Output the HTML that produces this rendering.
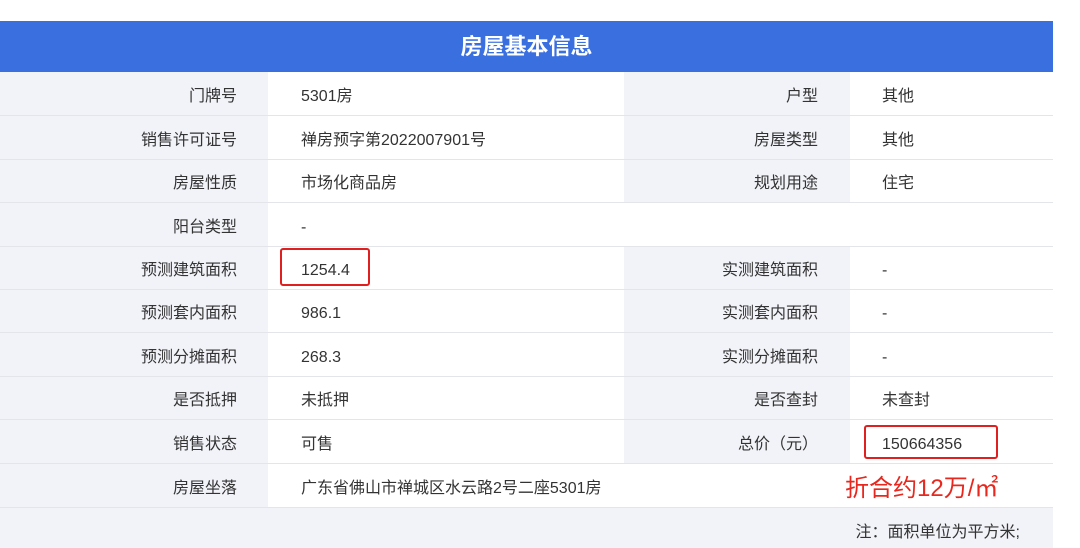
<!DOCTYPE html>
<html><head><meta charset="utf-8"><style>
body{margin:0;width:1080px;height:543px;background:#fff;overflow:hidden;font-family:"Liberation Sans","Noto Sans CJK SC",sans-serif;color:#333;position:relative}
.hd{position:absolute;left:0;top:21px;width:1053px;height:51px;background:#3a6fe0;color:#fff;font-size:22px;font-weight:bold;text-align:center;line-height:52px}
.r{position:absolute;left:0;width:1053px;box-sizing:border-box;border-bottom:1px solid #e3e5eb;font-size:16px;overflow:hidden}
.r div{position:absolute;top:0;bottom:0;box-sizing:border-box;white-space:nowrap;padding-top:2px}
.a{left:0;width:268px;background:#f2f3f8;text-align:right;padding-right:31px}
.b{left:268px;width:356px;background:#fff;padding-left:33px}
.c{left:624px;width:226px;background:#f2f3f8;text-align:right;padding-right:32px}
.d{left:850px;width:203px;background:#fff;padding-left:32px}
.box{position:absolute;border:2.5px solid #e02020;border-radius:3px}
</style></head><body>
<div class="hd">房屋基本信息</div>
<div class="r" style="top:72px;height:44px;line-height:45px"><div class="a">门牌号</div><div class="b">5301房</div><div class="c">户型</div><div class="d">其他</div></div>
<div class="r" style="top:116px;height:44px;line-height:45px"><div class="a">销售许可证号</div><div class="b">禅房预字第2022007901号</div><div class="c">房屋类型</div><div class="d">其他</div></div>
<div class="r" style="top:160px;height:43px;line-height:44px"><div class="a">房屋性质</div><div class="b">市场化商品房</div><div class="c">规划用途</div><div class="d">住宅</div></div>
<div class="r" style="top:203px;height:44px;line-height:45px"><div class="a">阳台类型</div><div class="b" style="width:785px">-</div></div>
<div class="r" style="top:247px;height:43px;line-height:44px"><div class="a">预测建筑面积</div><div class="b">1254.4</div><div class="c">实测建筑面积</div><div class="d">-</div></div>
<div class="r" style="top:290px;height:43px;line-height:44px"><div class="a">预测套内面积</div><div class="b">986.1</div><div class="c">实测套内面积</div><div class="d">-</div></div>
<div class="r" style="top:333px;height:44px;line-height:45px"><div class="a">预测分摊面积</div><div class="b">268.3</div><div class="c">实测分摊面积</div><div class="d">-</div></div>
<div class="r" style="top:377px;height:43px;line-height:44px"><div class="a">是否抵押</div><div class="b">未抵押</div><div class="c">是否查封</div><div class="d">未查封</div></div>
<div class="r" style="top:420px;height:44px;line-height:45px"><div class="a">销售状态</div><div class="b">可售</div><div class="c">总价（元）</div><div class="d">150664356</div></div>
<div class="r" style="top:464px;height:44px;line-height:45px"><div class="a">房屋坐落</div><div class="b" style="width:785px">广东省佛山市禅城区水云路2号二座5301房</div></div>
<div class="r" style="top:508px;height:40px;border:none;line-height:46px"><div style="left:0;width:1053px;background:#f2f3f8;text-align:right;padding-right:33px">注：面积单位为平方米;</div></div>
<div class="box" style="left:280px;top:248px;width:86px;height:34px"></div>
<div class="box" style="left:864px;top:425px;width:130px;height:30px"></div>
<div style="position:absolute;left:845px;top:471px;font-size:24px;color:#e8281e;line-height:36px">折合约12万/㎡</div>
</body></html>
